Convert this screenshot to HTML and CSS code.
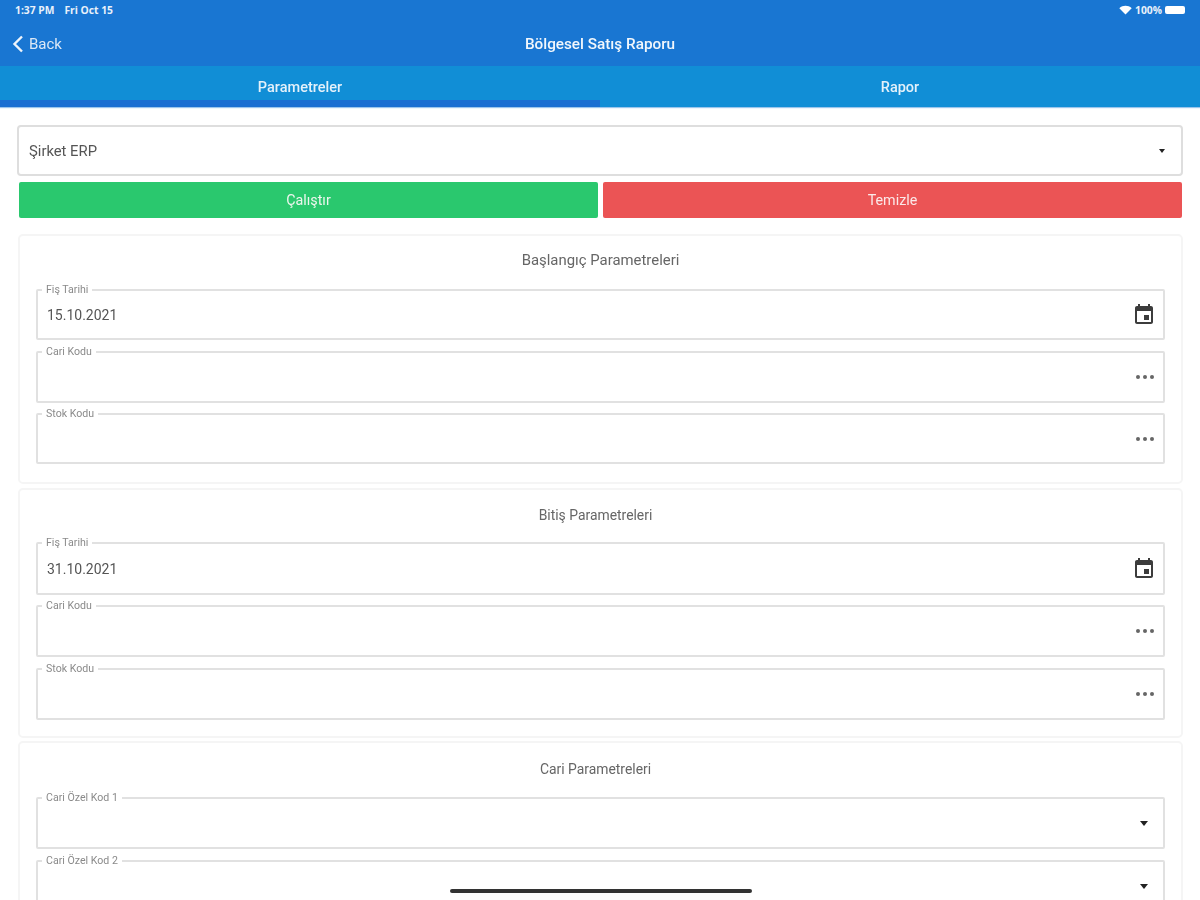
FILE: index.html
```html
<!DOCTYPE html>
<html lang="tr">
<head>
<meta charset="utf-8">
<title>Bölgesel Satış Raporu</title>
<link rel="stylesheet" href="styles.css">
</head>
<body>
<div class="app">
  <header class="header">
    <div class="status">
      <span class="status-time">1:37 PM</span>
      <span class="status-date">Fri Oct 15</span>
      <span class="status-right">
        <svg class="wifi" width="13" height="10" viewBox="0 0 13 10"><path d="M6.5 9.6 0.3 3.2C3.8 0 9.2 0 12.7 3.2Z" fill="#fff"/></svg>
        <span>100%</span>
        <span class="battery"></span>
      </span>
    </div>
    <div class="navbar">
      <span class="back">
        <svg width="12" height="18" viewBox="0 0 12 18"><path d="M10 1.500 2.500 9l7.500 7.500" fill="none" stroke="#eef4fb" stroke-width="2.400"/></svg>
        <span>Back</span>
      </span>
      <span class="nav-title">Bölgesel Satış Raporu</span>
      <span></span>
    </div>
  </header>
  <nav class="tabs">
    <div class="tab tab-active">Parametreler</div>
    <div class="tab">Rapor</div>
  </nav>
  <main class="content">
    <div class="select-top">
      <span>Şirket ERP</span>
      <span class="caret caret-sm"></span>
    </div>
    <div class="actions">
      <div class="btn btn-green">Çalıştır</div>
      <div class="btn btn-red">Temizle</div>
    </div>

    <section class="card card-1">
      <h2 class="card-title">Başlangıç Parametreleri</h2>
      <div class="field h51 gap-11"><label class="field-label">Fiş Tarihi</label><span class="field-value">15.10.2021</span>
        <svg class="cal" width="24" height="24" viewBox="0 0 24 24"><path d="M17 12h-5v5h5v-5zM16 1v2H8V1H6v2H5c-1.100 0-2 .9-2 2v14c0 1.100.9 2 2 2h14c1.100 0 2-.9 2-2V5c0-1.100-.9-2-2-2h-1V1h-2zm3 18H5V8h14v11z" fill="#3c3c3c"/></svg>
      </div>
      <div class="field h52"><label class="field-label">Cari Kodu</label><span class="dots"><i></i><i></i><i></i></span></div>
      <div class="field h51"><label class="field-label">Stok Kodu</label><span class="dots"><i></i><i></i><i></i></span></div>
    </section>

    <section class="card card-2">
      <h2 class="card-title title-shift">Bitiş Parametreleri</h2>
      <div class="field h53"><label class="field-label">Fiş Tarihi</label><span class="field-value">31.10.2021</span>
        <svg class="cal" width="24" height="24" viewBox="0 0 24 24"><path d="M17 12h-5v5h5v-5zM16 1v2H8V1H6v2H5c-1.100 0-2 .9-2 2v14c0 1.100.9 2 2 2h14c1.100 0 2-.9 2-2V5c0-1.100-.9-2-2-2h-1V1h-2zm3 18H5V8h14v11z" fill="#3c3c3c"/></svg>
      </div>
      <div class="field h52 gap-11"><label class="field-label">Cari Kodu</label><span class="dots"><i></i><i></i><i></i></span></div>
      <div class="field h52"><label class="field-label">Stok Kodu</label><span class="dots"><i></i><i></i><i></i></span></div>
    </section>

    <section class="card card-3">
      <h2 class="card-title title-shift">Cari Parametreleri</h2>
      <div class="field h52 gap-11"><label class="field-label">Cari Özel Kod 1</label><span class="caret"></span></div>
      <div class="field h52"><label class="field-label">Cari Özel Kod 2</label><span class="caret"></span></div>
    </section>
  </main>
  <div class="home-bar"></div>
</div>
</body>
</html>
```

FILE: styles.css
```css
* { box-sizing: border-box; }
html, body { margin: 0; padding: 0; background: #fff; }
body { font-family: Roboto, "Liberation Sans", sans-serif; overflow: hidden; }
.app { position: relative; width: 1200px; height: 900px; overflow: hidden; filter: blur(0.6px); }

.header { height: 66px; background: #1976d2; color: #fff; display: flex; flex-direction: column; }
.status { height: 22px; padding: 0 12px 2px 15px; display: flex; align-items: center; gap: 10px; font-size: 10.300px; font-weight: 700; font-family: "Open Sans", sans-serif; color: #e8f1fa; }
.status-right { margin-left: auto; display: flex; align-items: center; gap: 3px; }
.battery { width: 20px; height: 8px; background: #fff; border-radius: 2px; margin-right: 3px; }
.navbar { flex: 1; display: grid; grid-template-columns: 1fr auto 1fr; align-items: center; }
.back { margin-left: 12px; display: flex; align-items: center; gap: 5px; font-size: 15px; color: #dce8f6; }
.nav-title { font-size: 15.300px; font-weight: 500; color: #f2f7fc; }

.tabs { height: 41px; background: #118ed6; display: flex; color: #e4f1fa; font-size: 14.500px; font-weight: 500; box-shadow: 0 1px 1px #9cc6ec; }
.tab { flex: 1; display: flex; justify-content: center; padding-top: 13px; line-height: 18px; }
.tab-active { border-bottom: 7px solid #1a6fd2; }

.content { padding: 18px 17px 0 18px; }
.select-top { height: 51px; margin-left: -1px; border: 2px solid #dedede; border-radius: 4px; display: flex; align-items: center; justify-content: space-between; padding: 0 16px 0 10px; font-size: 14.800px; color: #555; }
.caret { margin-left: auto; margin-right: 6px; width: 0; height: 0; border-left: 4px solid transparent; border-right: 4px solid transparent; border-top: 5px solid #222; }
.caret-sm { margin: 0; border-left-width: 3.500px; border-right-width: 3.500px; border-top-width: 4px; }

.actions { display: flex; gap: 5px; margin: 6px 1px 16px 1px; }
.btn { flex: 1; height: 36px; border-radius: 2px; display: flex; align-items: center; justify-content: center; color: #eef6ee; font-size: 14.300px; }
.btn-green { background: #2ac86e; }
.btn-red { background: #eb5455; color: #fbe9e9; }

.card { height: 250px; border: 2px solid #f5f5f5; border-radius: 5px; padding: 0 16px; }
.card-1 { margin-bottom: 4px; }
.card-2 { margin-bottom: 3px; }
.card-3 { height: 300px; }
.card-title { margin: 0; font-size: 14.900px; font-weight: 400; color: #666; text-align: center; line-height: 48px; height: 53px; }
.card-2 .card-title { height: 52px; line-height: 50px; }
.card-3 .card-title { height: 54px; line-height: 52px; }
.title-shift { padding-right: 10px; font-size: 13.900px; }

.field { position: relative; display: flex; align-items: center; padding: 0 9px; border: 2px solid #e1e1e1; border-radius: 2px; margin-bottom: 10px; }
.gap-11 { margin-bottom: 11px; }
.h51 { height: 51px; }
.h52 { height: 52px; }
.h53 { height: 53px; }
.field-label { position: absolute; left: 4px; top: -7px; padding: 0 4px; background: #fff; font-size: 10.600px; line-height: 11px; color: #8a8a8a; }
.field-value { font-size: 14px; line-height: 17px; padding-top: 1px; color: #555; }
.cal { margin-left: auto; margin-right: -2px; }
.dots { margin-left: auto; display: flex; gap: 3px; }
.dots i { width: 4px; height: 4px; border-radius: 50%; background: #666; }

.home-bar { position: absolute; left: 450px; top: 889px; width: 302px; height: 4px; border-radius: 2px; background: #333; }
```
